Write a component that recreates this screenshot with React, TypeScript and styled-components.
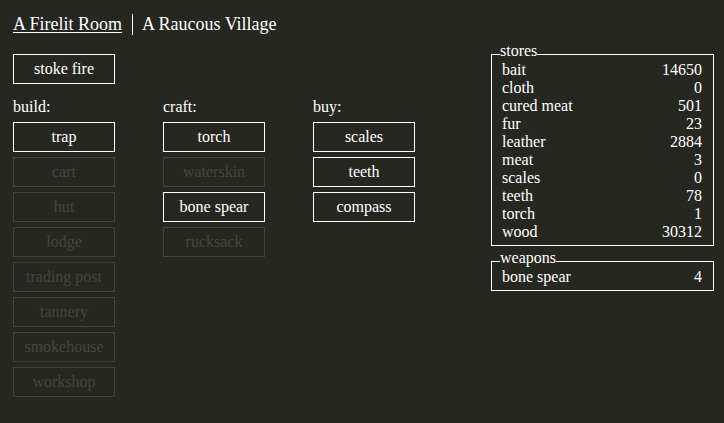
import React from "react";
import styled, { createGlobalStyle } from "styled-components";

const Global = createGlobalStyle`
  html, body { margin: 0; padding: 0; background: #272722; }
  body {
    color: #ffffff;
    font-family: "Liberation Serif", "Times New Roman", serif;
    font-size: 16px;
  }
`;

const Page = styled.div`
  display: flex;
  justify-content: space-between;
  align-items: flex-start;
  padding: 14px 10px 0 13px;
  width: 724px;
  height: 423px;
  box-sizing: border-box;
`;

const Left = styled.div`
  display: flex;
  flex-direction: column;
`;

const Header = styled.div`
  display: flex;
  align-items: stretch;
  font-size: 18px;
`;

const HeaderItem = styled.div<{ $active?: boolean; $divided?: boolean }>`
  text-decoration: ${(p) => (p.$active ? "underline" : "none")};
  text-underline-offset: 2px;
  padding-right: 10px;
  ${(p) => (p.$divided ? "border-left: 1px solid #ffffff; padding-left: 9px;" : "")}
`;

const Button = styled.div<{ $disabled?: boolean }>`
  box-sizing: border-box;
  width: 102px;
  height: 30px;
  display: flex;
  align-items: center;
  justify-content: center;
  border: 1px solid ${(p) => (p.$disabled ? "#42423d" : "#ffffff")};
  color: ${(p) => (p.$disabled ? "#45453f" : "#ffffff")};
  white-space: nowrap;
`;

const Stoke = styled(Button)`
  margin-top: 19px;
`;

const Columns = styled.div`
  display: grid;
  grid-template-columns: repeat(3, 102px);
  column-gap: 48px;
  margin-top: 14px;
  align-items: start;
`;

const Column = styled.div`
  display: flex;
  flex-direction: column;
  gap: 5px;
`;

const ColumnTitle = styled.div`
  margin-bottom: 1px;
`;

const Right = styled.div`
  display: flex;
  flex-direction: column;
  gap: 15px;
  margin-top: 40px;
  width: 223px;
`;

const Panel = styled.div`
  position: relative;
  border: 1px solid #ffffff;
  padding: 6px 11px 4px 10px;
`;

const Legend = styled.div`
  position: absolute;
  top: -13px;
  left: 8px;
  background: #272722;
  line-height: 18px;
`;

const Row = styled.div`
  display: flex;
  justify-content: space-between;
  line-height: 18px;
  height: 18px;
`;

const build: [string, boolean][] = [
  ["trap", false],
  ["cart", true],
  ["hut", true],
  ["lodge", true],
  ["trading post", true],
  ["tannery", true],
  ["smokehouse", true],
  ["workshop", true],
];
const craft: [string, boolean][] = [
  ["torch", false],
  ["waterskin", true],
  ["bone spear", false],
  ["rucksack", true],
];
const buy: [string, boolean][] = [
  ["scales", false],
  ["teeth", false],
  ["compass", false],
];

const stores: [string, string][] = [
  ["bait", "14650"],
  ["cloth", "0"],
  ["cured meat", "501"],
  ["fur", "23"],
  ["leather", "2884"],
  ["meat", "3"],
  ["scales", "0"],
  ["teeth", "78"],
  ["torch", "1"],
  ["wood", "30312"],
];

const ButtonColumn = ({ title, items }: { title: string; items: [string, boolean][] }) => (
  <Column>
    <ColumnTitle>{title}</ColumnTitle>
    {items.map(([label, disabled]) => (
      <Button key={label} $disabled={disabled}>
        {label}
      </Button>
    ))}
  </Column>
);

export default function App() {
  return (
    <>
      <Global />
      <Page>
        <Left>
          <Header>
            <HeaderItem $active>A Firelit Room</HeaderItem>
            <HeaderItem $divided>A Raucous Village</HeaderItem>
          </Header>
          <Stoke>stoke fire</Stoke>
          <Columns>
            <ButtonColumn title="build:" items={build} />
            <ButtonColumn title="craft:" items={craft} />
            <ButtonColumn title="buy:" items={buy} />
          </Columns>
        </Left>
        <Right>
          <Panel>
            <Legend>stores</Legend>
            {stores.map(([k, v]) => (
              <Row key={k}>
                <span>{k}</span>
                <span>{v}</span>
              </Row>
            ))}
          </Panel>
          <Panel>
            <Legend>weapons</Legend>
            <Row>
              <span>bone spear</span>
              <span>4</span>
            </Row>
          </Panel>
        </Right>
      </Page>
    </>
  );
}
